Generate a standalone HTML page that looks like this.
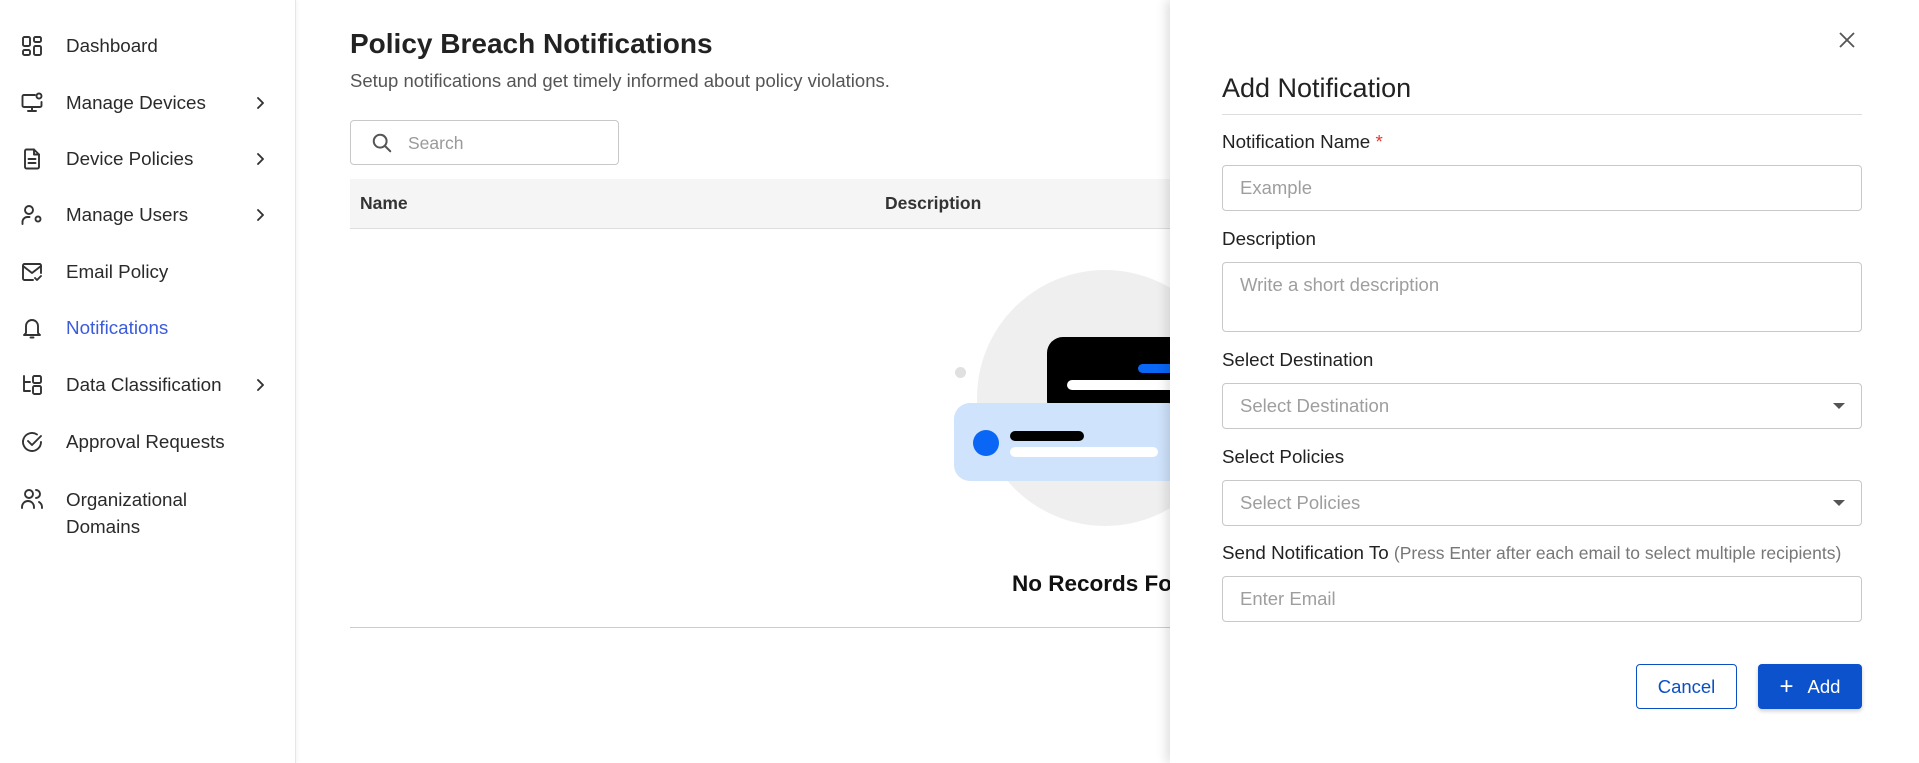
<!DOCTYPE html>
<html><head><meta charset="utf-8"><style>
*{box-sizing:border-box;margin:0;padding:0}
body{width:1919px;height:763px;overflow:hidden;background:#fff;font-family:"Liberation Sans",sans-serif;position:relative;color:#222}
.side{position:absolute;left:0;top:0;width:296px;height:763px;background:#fff;border-right:1px solid #e6e6e6;box-shadow:1px 0 4px rgba(0,0,0,.05)}
.it{position:absolute;left:0;width:296px;height:30px;display:flex;align-items:center;font-size:18.8px;color:#2a2a2a}
.it svg{position:absolute;left:20px;width:24px;height:24px;fill:none;stroke:#333;stroke-width:1.9;stroke-linecap:round;stroke-linejoin:round}
.it span{position:absolute;left:66px}
.it .ch{position:absolute;left:252px;width:16px;height:16px}
.abs{position:absolute}
.lbl{position:absolute;left:1222px;font-size:18.8px;color:#222}
.inp{position:absolute;left:1222px;width:640px;border:1px solid #c8c8c8;border-radius:4px;font-size:18.5px;color:#9e9e9e;padding-left:17px;display:flex;align-items:center}
.tri{position:absolute;right:16px;top:50%;margin-top:-3px;border-left:6px solid transparent;border-right:6px solid transparent;border-top:6px solid #555}
</style></head><body>
<div class="side">
 <div class="it" style="top:31px"><svg viewBox="0 0 24 24"><rect x="3" y="3" width="7" height="9" rx="1.5"/><rect x="14" y="3" width="7" height="5" rx="1.5"/><rect x="3" y="16" width="7" height="5" rx="1.5"/><rect x="14" y="12" width="7" height="9" rx="1.5"/></svg><span>Dashboard</span></div>
 <div class="it" style="top:88px"><svg viewBox="0 0 24 24"><path d="M15 4H4a1.5 1.5 0 0 0-1.5 1.5v9A1.5 1.5 0 0 0 4 16h16a1.5 1.5 0 0 0 1.5-1.5V11"/><path d="M12 16v4M8 20h8"/><circle cx="19" cy="5" r="2.5"/></svg><span>Manage Devices</span><svg class="ch" viewBox="0 0 16 16"><path d="M6 3l5 5-5 5"/></svg></div>
 <div class="it" style="top:144px"><svg viewBox="0 0 24 24"><path d="M14 2.5H6.5A1.5 1.5 0 0 0 5 4v16a1.5 1.5 0 0 0 1.5 1.5h11A1.5 1.5 0 0 0 19 20V7.5z"/><path d="M14 2.5v5h5M8.5 12h7M8.5 16h7"/></svg><span>Device Policies</span><svg class="ch" viewBox="0 0 16 16"><path d="M6 3l5 5-5 5"/></svg></div>
 <div class="it" style="top:200px"><svg viewBox="0 0 24 24"><circle cx="9" cy="7" r="4"/><path d="M2.5 21v-2a5 5 0 0 1 5-5h2"/><circle cx="18" cy="16" r="2.5"/></svg><span>Manage Users</span><svg class="ch" viewBox="0 0 16 16"><path d="M6 3l5 5-5 5"/></svg></div>
 <div class="it" style="top:257px"><svg viewBox="0 0 24 24"><path d="M21 13V5.5A1.5 1.5 0 0 0 19.5 4h-15A1.5 1.5 0 0 0 3 5.5v13A1.5 1.5 0 0 0 4.5 20H13"/><path d="M3 6l9 7 9-7M15 18l2 2 4-4"/></svg><span>Email Policy</span></div>
 <div class="it" style="top:313px"><svg viewBox="0 0 24 24"><path d="M6 17V10a6 6 0 0 1 12 0v7l2 2H4z"/><path d="M10.5 21.5h3"/></svg><span style="color:#3b5bdb">Notifications</span></div>
 <div class="it" style="top:370px"><svg viewBox="0 0 24 24"><path d="M4 3v15h6M4 9h6"/><rect x="13" y="3" width="8" height="7" rx="1.5"/><rect x="13" y="13" width="8" height="8" rx="1.5"/></svg><span>Data Classification</span><svg class="ch" viewBox="0 0 16 16"><path d="M6 3l5 5-5 5"/></svg></div>
 <div class="it" style="top:427px"><svg viewBox="0 0 24 24"><path d="M21 12a9 9 0 1 1-4-7.5"/><path d="M8 11l4 4 9-9"/></svg><span>Approval Requests</span></div>
 <div class="it" style="top:484px;height:58px"><svg viewBox="0 0 24 24" style="top:3px"><circle cx="9" cy="7" r="4"/><path d="M2 21v-1a6 6 0 0 1 12 0v1M16 3a4 4 0 0 1 0 8M22 21v-1a6 6 0 0 0-3-5"/></svg><span style="top:2px;line-height:27px">Organizational<br>Domains</span></div>
</div>

<div class="abs" style="left:350px;top:28px;font-size:28px;font-weight:bold;color:#222">Policy Breach Notifications</div>
<div class="abs" style="left:350px;top:70px;font-size:18.5px;color:#555">Setup notifications and get timely informed about policy violations.</div>
<div class="abs" style="left:350px;top:120px;width:269px;height:45px;border:1px solid #c8c8c8;border-radius:4px">
 <svg style="position:absolute;left:20px;top:11px" width="22" height="22" viewBox="0 0 24 24" fill="none" stroke="#555" stroke-width="2.2" stroke-linecap="round"><circle cx="10" cy="10" r="7"/><path d="M15 15l6 6"/></svg>
 <span style="position:absolute;left:57px;top:12px;font-size:17.5px;color:#9a9a9a">Search</span></div>
<div class="abs" style="left:350px;top:179px;width:830px;height:50px;background:#f5f5f5;border-bottom:1px solid #ddd"></div>
<div class="abs" style="left:360px;top:193px;font-size:17.5px;font-weight:bold;color:#333">Name</div>
<div class="abs" style="left:885px;top:193px;font-size:17.5px;font-weight:bold;color:#333">Description</div>
<div class="abs" style="left:350px;top:627px;width:830px;height:1px;background:#ccc"></div>
<div class="abs" style="left:977px;top:270px;width:256px;height:256px;border-radius:50%;background:#efefef"></div>
<div class="abs" style="left:955px;top:367px;width:11px;height:11px;border-radius:50%;background:#e0e0e0"></div>
<div class="abs" style="left:1047px;top:337px;width:160px;height:80px;border-radius:16px;background:#000"></div>
<div class="abs" style="left:1138px;top:364px;width:40px;height:9px;border-radius:5px;background:#0a66f5"></div>
<div class="abs" style="left:1067px;top:380px;width:120px;height:10px;border-radius:5px;background:#fff"></div>
<div class="abs" style="left:954px;top:403px;width:230px;height:78px;border-radius:16px;background:#cfe3fc"></div>
<div class="abs" style="left:973px;top:430px;width:26px;height:26px;border-radius:50%;background:#0a66f5"></div>
<div class="abs" style="left:1010px;top:431px;width:74px;height:10px;border-radius:5px;background:#000"></div>
<div class="abs" style="left:1010px;top:447px;width:148px;height:10px;border-radius:5px;background:#fff"></div>
<div class="abs" style="left:1012px;top:571px;font-size:22.5px;font-weight:bold;color:#111;white-space:nowrap">No Records Found</div>

<div class="abs" style="left:1170px;top:0;width:749px;height:763px;background:#fff;box-shadow:-4px 0 10px rgba(0,0,0,.12)"></div>
<svg class="abs" style="left:1837px;top:30px" width="20" height="20" viewBox="0 0 20 20" stroke="#555" stroke-width="1.8"><path d="M3 3l14 14M17 3L3 17"/></svg>
<div class="abs" style="left:1222px;top:73px;font-size:27px;color:#222">Add Notification</div>
<div class="abs" style="left:1222px;top:114px;width:640px;height:1px;background:#ddd"></div>
<div class="lbl" style="top:131px">Notification Name <span style="color:#e53935">*</span></div>
<div class="inp" style="top:165px;height:46px">Example</div>
<div class="lbl" style="top:228px">Description</div>
<div class="inp" style="top:262px;height:70px;align-items:flex-start;padding-top:11px">Write a short description</div>
<div class="lbl" style="top:349px">Select Destination</div>
<div class="inp" style="top:383px;height:46px">Select Destination<i class="tri"></i></div>
<div class="lbl" style="top:446px">Select Policies</div>
<div class="inp" style="top:480px;height:46px">Select Policies<i class="tri"></i></div>
<div class="lbl" style="top:542px;white-space:nowrap">Send Notification To <span style="color:#777;font-size:17.5px">(Press Enter after each email to select multiple recipients)</span></div>
<div class="inp" style="top:576px;height:46px">Enter Email</div>
<div class="abs" style="left:1636px;top:664px;width:101px;height:45px;border:1px solid #0b4fc4;border-radius:4px;color:#0b4fc4;font-size:18.5px;display:flex;align-items:center;justify-content:center">Cancel</div>
<div class="abs" style="left:1758px;top:664px;width:104px;height:45px;background:#0b52cc;border-radius:4px;color:#fff;font-size:18.5px;display:flex;align-items:center;justify-content:center;box-shadow:0 2px 4px rgba(0,0,0,.2)"><span style="font-size:24px;margin-right:14px;line-height:1">+</span>Add</div>
</body></html>
